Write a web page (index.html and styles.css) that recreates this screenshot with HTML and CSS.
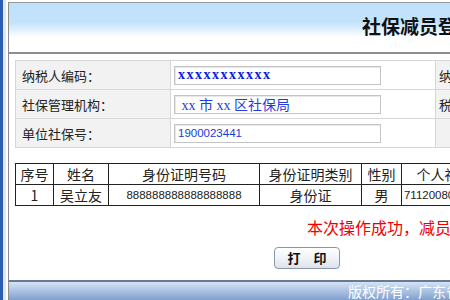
FILE: index.html
```html
<!DOCTYPE html>
<html lang="zh-CN">
<head>
    <meta charset="UTF-8">
    <title>社保减员登记</title>
<link rel="stylesheet" href="styles.css">
</head>
<body>
<div class="frame">
    <div class="page">
        <div class="header">
            <h1>社保减员登记</h1>
        </div>
        <div class="content">
            <table class="info">
                <tr>
                    <td class="label">纳税人编码：</td>
                    <td class="value"><input class="code" type="text" value="xxxxxxxxxxx" readonly></td>
                    <td class="label side">纳税人名称：</td>
                </tr>
                <tr>
                    <td class="label">社保管理机构：</td>
                    <td class="value"><input class="org" type="text" value=" xx 市 xx 区社保局" readonly></td>
                    <td class="label side">税务管理机构：</td>
                </tr>
                <tr>
                    <td class="label">单位社保号：</td>
                    <td class="value"><input class="num" type="text" value="1900023441" readonly></td>
                    <td class="label side"></td>
                </tr>
            </table>

            <table class="list">
                <thead>
                    <tr>
                        <th class="c1">序号</th>
                        <th class="c2">姓名</th>
                        <th class="c3">身份证明号码</th>
                        <th class="c4">身份证明类别</th>
                        <th class="c5">性别</th>
                        <th class="c6">个人社保号</th>
                    </tr>
                </thead>
                <tbody>
                    <tr>
                        <td>1</td>
                        <td>吴立友</td>
                        <td class="digits">888888888888888888</td>
                        <td>身份证</td>
                        <td>男</td>
                        <td class="digits">711200800000012</td>
                    </tr>
                </tbody>
            </table>

            <p class="msg">本次操作成功，减员登记已完成！</p>

            <div class="actions">
                <button type="button" class="print-btn">打　印</button>
            </div>
        </div>
        <div class="footer">版权所有：广东省地方税务局</div>
    </div>
</div>
</body>
</html>
```

FILE: styles.css
```css
html, body {
    margin: 0;
    padding: 0;
    overflow: hidden;
    background: #fff;
}
body {
    font-family: "Noto Sans CJK SC", "Liberation Sans", sans-serif;
    color: #222;
}
.frame {
    width: 900px;
    height: 300px;
    border-left: 3px solid #2d5eae;
    padding-left: 3px;
    background: #fff;
    box-shadow: inset 3px 0 0 #dfe7f0;
    padding-top: 2px;
}
.page {
    margin-left: 2px;
    width: 820px;
    height: 298px;
    border-left: 1px solid #8c8c8c;
    border-top: 1px solid #9a9a9a;
    display: flex;
    flex-direction: column;
}
.header {
    height: 49px;
    border-bottom: 2px solid #8e8e8e;
    background: linear-gradient(to bottom, #bfe1fb 0%, #c3e3fb 40%, #ffffff 70%, #ffffff 100%);
    display: flex;
    align-items: center;
    justify-content: center;
}
.header h1 {
    margin: 0;
    margin-top: -4px;
    font-size: 19px;
    font-weight: bold;
    color: #111;
}
.content {
    flex: 1;
    padding: 6px 0 0 6px;
}
.info {
    border-collapse: collapse;
    table-layout: fixed;
    width: 600px;
}
.info td {
    border: 1px solid #d6d6d6;
    height: 28px;
    padding: 0;
    font-size: 13px;
}
.info .label {
    background: #f2f2f2;
    padding-left: 6px;
    color: #222;
    white-space: nowrap;
    overflow: hidden;
}
.info .side {
    padding-left: 3px;
}
.info td:first-child {
    width: 148px;
}
.info .value {
    width: 261px;
    padding-left: 3px;
}
.info input {
    width: 199px;
    height: 17px;
    border: 1px solid #c4c4c4;
    box-shadow: inset 1px 1px 0 #e8e8e8;
    padding: 0 3px;
    color: #0a1ee0;
    outline: none;
    display: block;
}
.info .code {
    font-family: "Liberation Serif", serif;
    font-weight: bold;
    font-size: 14px;
    letter-spacing: 1.5px;
}
.info .org {
    font-family: "Liberation Serif", "Noto Sans CJK SC", serif;
    font-size: 14px;
    color: #1f3ce0;
}
.info .num {
    font-family: "Liberation Sans", sans-serif;
    font-size: 11.5px;
    color: #1a3ad8;
}
.list {
    border-collapse: collapse;
    table-layout: fixed;
    margin-top: 15px;
    width: 487px;
}
.list th, .list td {
    border: 1px solid #222;
    font-size: 14px;
    font-weight: normal;
    text-align: center;
    padding: 0;
    height: 20px;
    line-height: 18px;
    white-space: nowrap;
    overflow: hidden;
}
.list .c1 { width: 37px; }
.list .c2 { width: 54px; }
.list .c3 { width: 150px; }
.list .c4 { width: 101px; }
.list .c5 { width: 39px; }
.list .digits {
    font-family: "Liberation Sans", sans-serif;
    font-size: 11.5px;
}
.msg {
    margin: 10px 0 0 0;
    padding-left: 292px;
    font-size: 16px;
    color: #f00000;
    white-space: nowrap;
    line-height: 22px;
}
.actions {
    margin-top: 6px;
    padding-left: 259px;
}
.print-btn {
    width: 66px;
    height: 22px;
    border: 1px solid #8797ad;
    border-radius: 4px;
    background: linear-gradient(to bottom, #ffffff 0%, #f1f3f6 50%, #dde2ea 100%);
    font-family: "Noto Sans CJK SC", sans-serif;
    font-size: 13px;
    font-weight: bold;
    color: #111;
    padding: 0;
    cursor: pointer;
}
.footer {
    height: 19px;
    border-top: 2px solid #6b7a90;
    background: linear-gradient(to bottom, #d4e3f5 0%, #a8c0e2 50%, #7c9ccb 100%);
    color: #fff;
    font-size: 14px;
    line-height: 19px;
    padding-left: 339px;
    white-space: nowrap;
}
```
